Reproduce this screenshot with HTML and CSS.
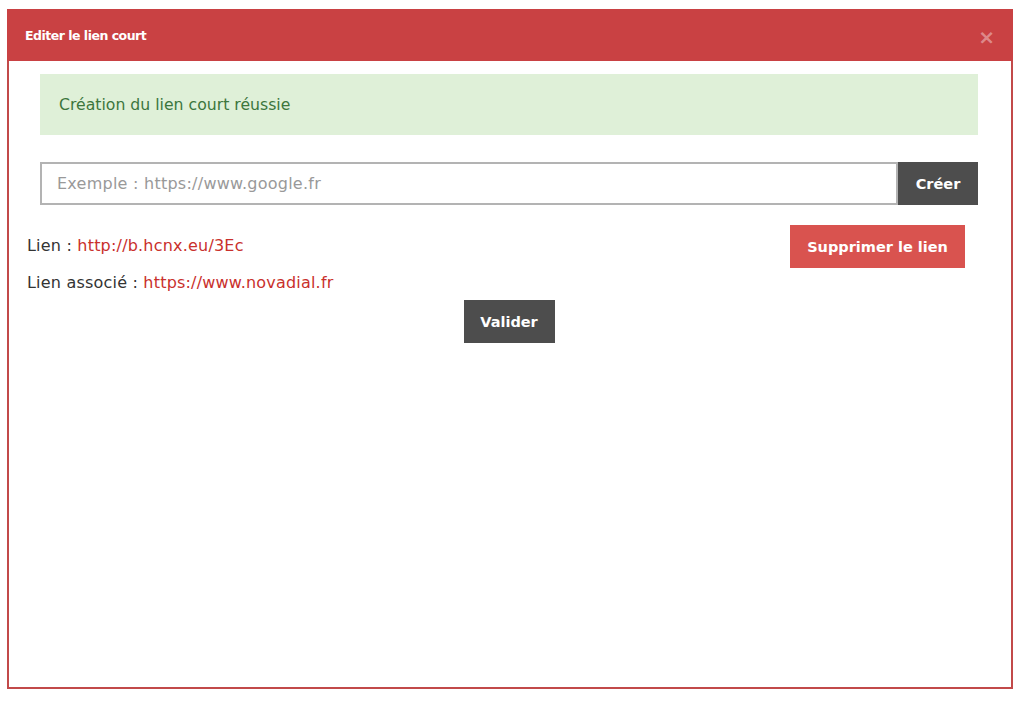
FILE: index.html
```html
<!DOCTYPE html>
<html lang="fr">
<head>
<meta charset="utf-8">
<title>Editer le lien court</title>
<link rel="stylesheet" href="styles.css">
</head>
<body>
<div class="modal">
  <div class="modal-header">
    <span class="modal-title">Editer le lien court</span>
    <span class="close">&times;</span>
  </div>
  <div class="modal-body">
    <div class="inner">
      <div class="alert">Création du lien court réussie</div>
      <div class="input-group">
        <input class="url-input" type="text" placeholder="Exemple : https://www.google.fr">
        <button class="btn btn-dark">Créer</button>
      </div>
    </div>
    <div class="info-row">
      <div class="info">
        <p class="line">Lien : <a href="#">http://b.hcnx.eu/3Ec</a></p>
        <p class="line">Lien associé : <a href="#">https://www.novadial.fr</a></p>
      </div>
      <button class="btn btn-danger">Supprimer le lien</button>
    </div>
    <div class="actions">
      <button class="btn btn-dark">Valider</button>
    </div>
  </div>
</div>
</body>
</html>
```
FILE: styles.css
```css
* { box-sizing: border-box; }
html, body { margin: 0; padding: 0; background: #fff; }
body {
  font-family: "DejaVu Sans", sans-serif;
  color: #333;
  width: 1019px;
  height: 705px;
  overflow: hidden;
}
.modal {
  position: fixed;
  left: 7px;
  top: 9px;
  width: 1006px;
  height: 680px;
  border: 2px solid #c24a4a;
  border-top: none;
  background: #fff;
}
.modal-header {
  height: 52px;
  margin: 0 -2px;
  background: #c94143;
  display: flex;
  align-items: center;
  justify-content: space-between;
  padding: 0 18px 0 18px;
}
.modal-title {
  color: #fff;
  font-weight: 700;
  font-size: 12.5px;
  letter-spacing: -0.5px;
}
.close {
  color: rgba(255,255,255,0.4);
  font-size: 20px;
  font-weight: 700;
  line-height: 1;
  margin-top: 3px;
}
.modal-body {
  padding: 13px 20px 0 18px;
}
.inner { margin: 0 13px; }
.alert {
  background: #dff0d8;
  color: #3c763d;
  font-size: 15.7px;
  height: 61px;
  display: flex;
  align-items: center;
  padding-left: 19px;
}
.input-group {
  display: flex;
  margin-top: 27px;
  height: 43px;
}
.url-input {
  flex: 1;
  border: 2px solid #b3b3b3;
  font-family: inherit;
  font-size: 16px;
  letter-spacing: 0.25px;
  padding: 0 15px;
  color: #555;
  outline: none;
}
.url-input::placeholder { color: #999; }
.btn {
  border: none;
  color: #fff;
  font-family: inherit;
  font-weight: 700;
  font-size: 14.5px;
  height: 43px;
  padding: 0;
  cursor: pointer;
}
.btn-dark { background: #4d4d4d; width: 80px; }
.btn-danger { background: #d9534f; width: 175px; margin-right: 26px; margin-top: 20px; }
.info-row {
  display: flex;
  justify-content: space-between;
  align-items: flex-start;
}
.info { padding-top: 22px; }
.line {
  margin: 0;
  font-size: 16px;
  letter-spacing: 0.2px;
  line-height: 37px;
  height: 37px;
}
.line a { color: #c9302c; text-decoration: none; }
.actions {
  display: flex;
  justify-content: center;
  margin-top: -1px;
}
.actions .btn { width: 91px; }
```
